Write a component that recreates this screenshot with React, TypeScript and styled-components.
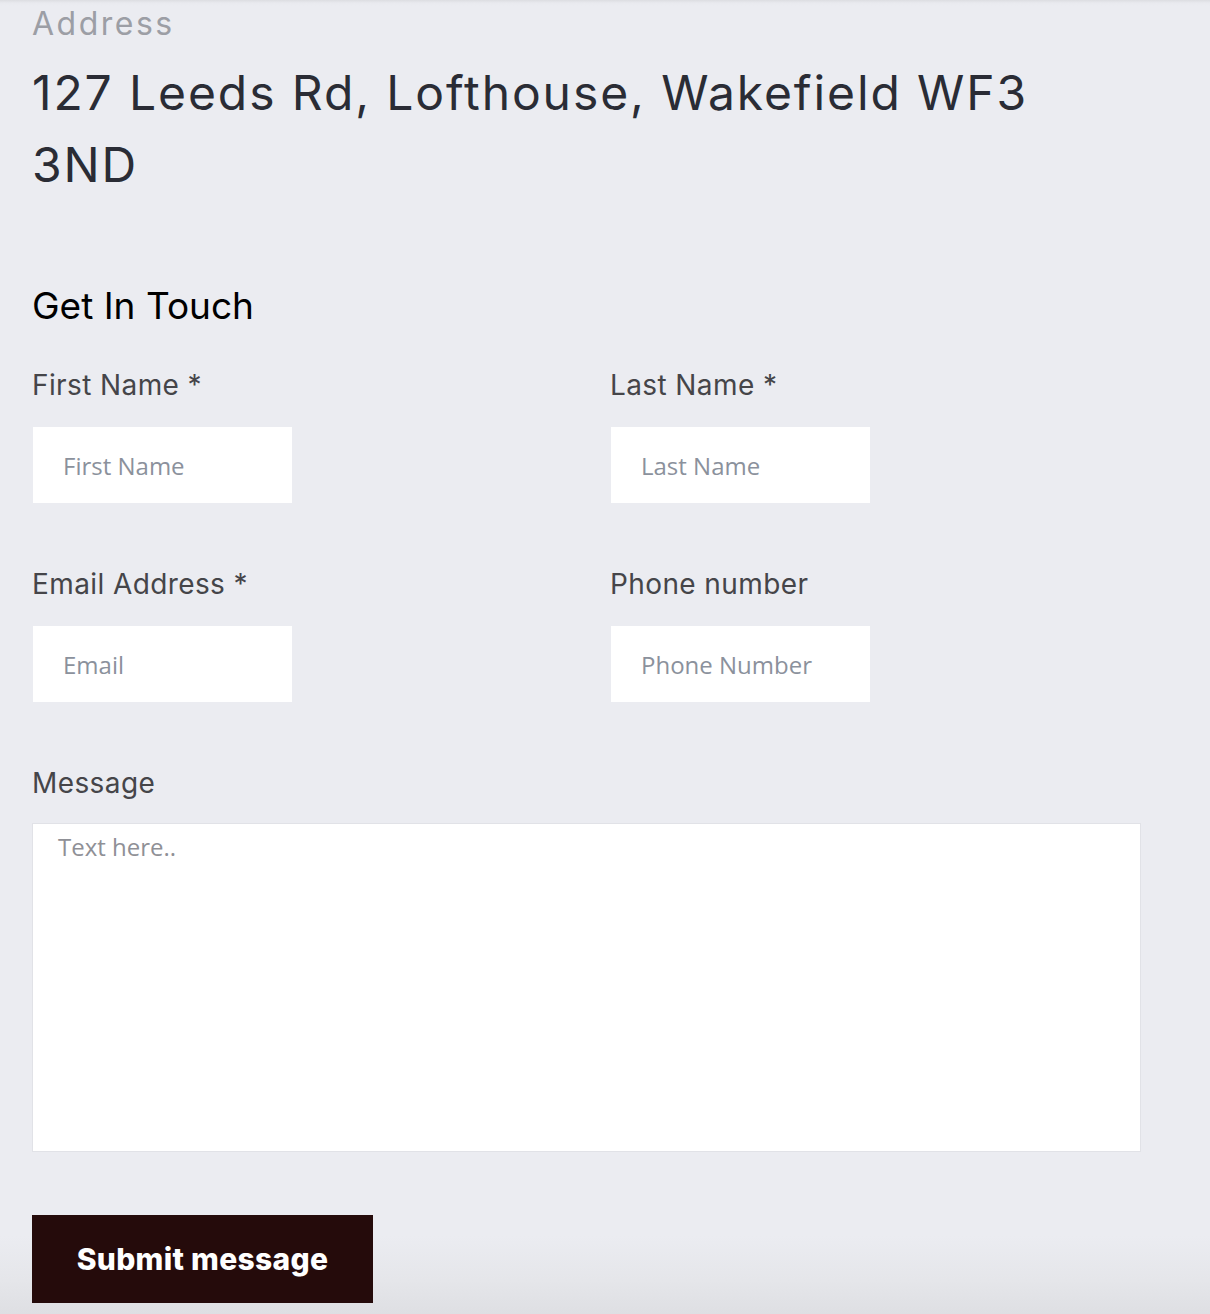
import React from "react";
import styled, { createGlobalStyle } from "styled-components";

const GlobalStyle = createGlobalStyle`
  html, body {
    margin: 0;
    padding: 0;
    background: #ebecf1;
  }
  * { box-sizing: border-box; }
`;

const Page = styled.div`
  min-height: 1314px;
  padding: 5px 32px 11px 32px;
  background: linear-gradient(
    to bottom,
    #dcdde1 0px,
    #e9eaef 3px,
    #ebecf1 6px,
    #ebecf1 1236px,
    #e5e6ea 1280px,
    #dedfe3 1314px
  );
  font-family: "Inter", "Noto Sans", sans-serif;
`;

const AddressLabel = styled.div`
  font-size: 32px;
  line-height: 38px;
  letter-spacing: 2.5px;
  color: #9c9ea5;
`;

const AddressText = styled.h2`
  margin: 14px 0 0 0;
  max-width: 1080px;
  font-size: 48px;
  line-height: 72px;
  font-weight: 400;
  letter-spacing: 1.9px;
  color: #2a2c35;
`;

const Title = styled.h3`
  margin: 83px 0 0 0;
  font-size: 37px;
  line-height: 44px;
  font-weight: 400;
  color: #000;
`;

const Form = styled.form`
  margin-top: 40px;
  display: flex;
  flex-direction: column;
  gap: 63px;
`;

const Row = styled.div`
  display: grid;
  grid-template-columns: 578px 1fr;
`;

const Field = styled.label`
  display: flex;
  flex-direction: column;
  align-items: flex-start;
`;

const LabelText = styled.span<{ $gap?: number }>`
  font-size: 28px;
  line-height: 34px;
  letter-spacing: 0.4px;
  color: #454549;
  margin-bottom: ${(p) => p.$gap ?? 24}px;
`;

const Input = styled.input`
  width: 261px;
  height: 78px;
  border: 1px solid #ebecf1;
  background: #fff;
  padding: 0 30px;
  font-family: "Open Sans", sans-serif;
  font-size: 24px;
  color: #333;
  outline: none;
  &::placeholder {
    color: #8b919c;
    opacity: 1;
  }
`;

const TextArea = styled.textarea`
  width: 1109px;
  height: 329px;
  border: 1px solid #e1e2e7;
  background: #fff;
  padding: 7px 25px;
  font-family: "Open Sans", sans-serif;
  font-size: 24px;
  line-height: 1.362;
  resize: none;
  outline: none;
  &::placeholder {
    color: #8f9096;
    opacity: 1;
  }
`;

const SubmitButton = styled.button`
  width: 341px;
  height: 88px;
  border: none;
  background: #250b0b;
  color: #fff;
  font-family: "Inter", sans-serif;
  font-weight: 800;
  font-size: 30px;
  letter-spacing: 0.3px;
  cursor: pointer;
  padding: 0;
`;

const fields: [string, string, boolean][][] = [
  [
    ["First Name", "First Name", true],
    ["Last Name", "Last Name", true],
  ],
  [
    ["Email Address", "Email", true],
    ["Phone number", "Phone Number", false],
  ],
];

export default function App() {
  return (
    <>
      <GlobalStyle />
      <Page>
        <AddressLabel>Address</AddressLabel>
        <AddressText>127 Leeds Rd, Lofthouse, Wakefield WF3 3ND</AddressText>
        <Title>Get In Touch</Title>
        <Form onSubmit={(e) => e.preventDefault()}>
          {fields.map((row, i) => (
            <Row key={i}>
              {row.map(([label, ph, req]) => (
                <Field key={label}>
                  <LabelText>
                    {label}
                    {req ? " *" : ""}
                  </LabelText>
                  <Input placeholder={ph} />
                </Field>
              ))}
            </Row>
          ))}
          <Field>
            <LabelText $gap={23}>Message</LabelText>
            <TextArea placeholder="Text here.." />
          </Field>
          <div>
            <SubmitButton type="submit">Submit message</SubmitButton>
          </div>
        </Form>
      </Page>
    </>
  );
}
